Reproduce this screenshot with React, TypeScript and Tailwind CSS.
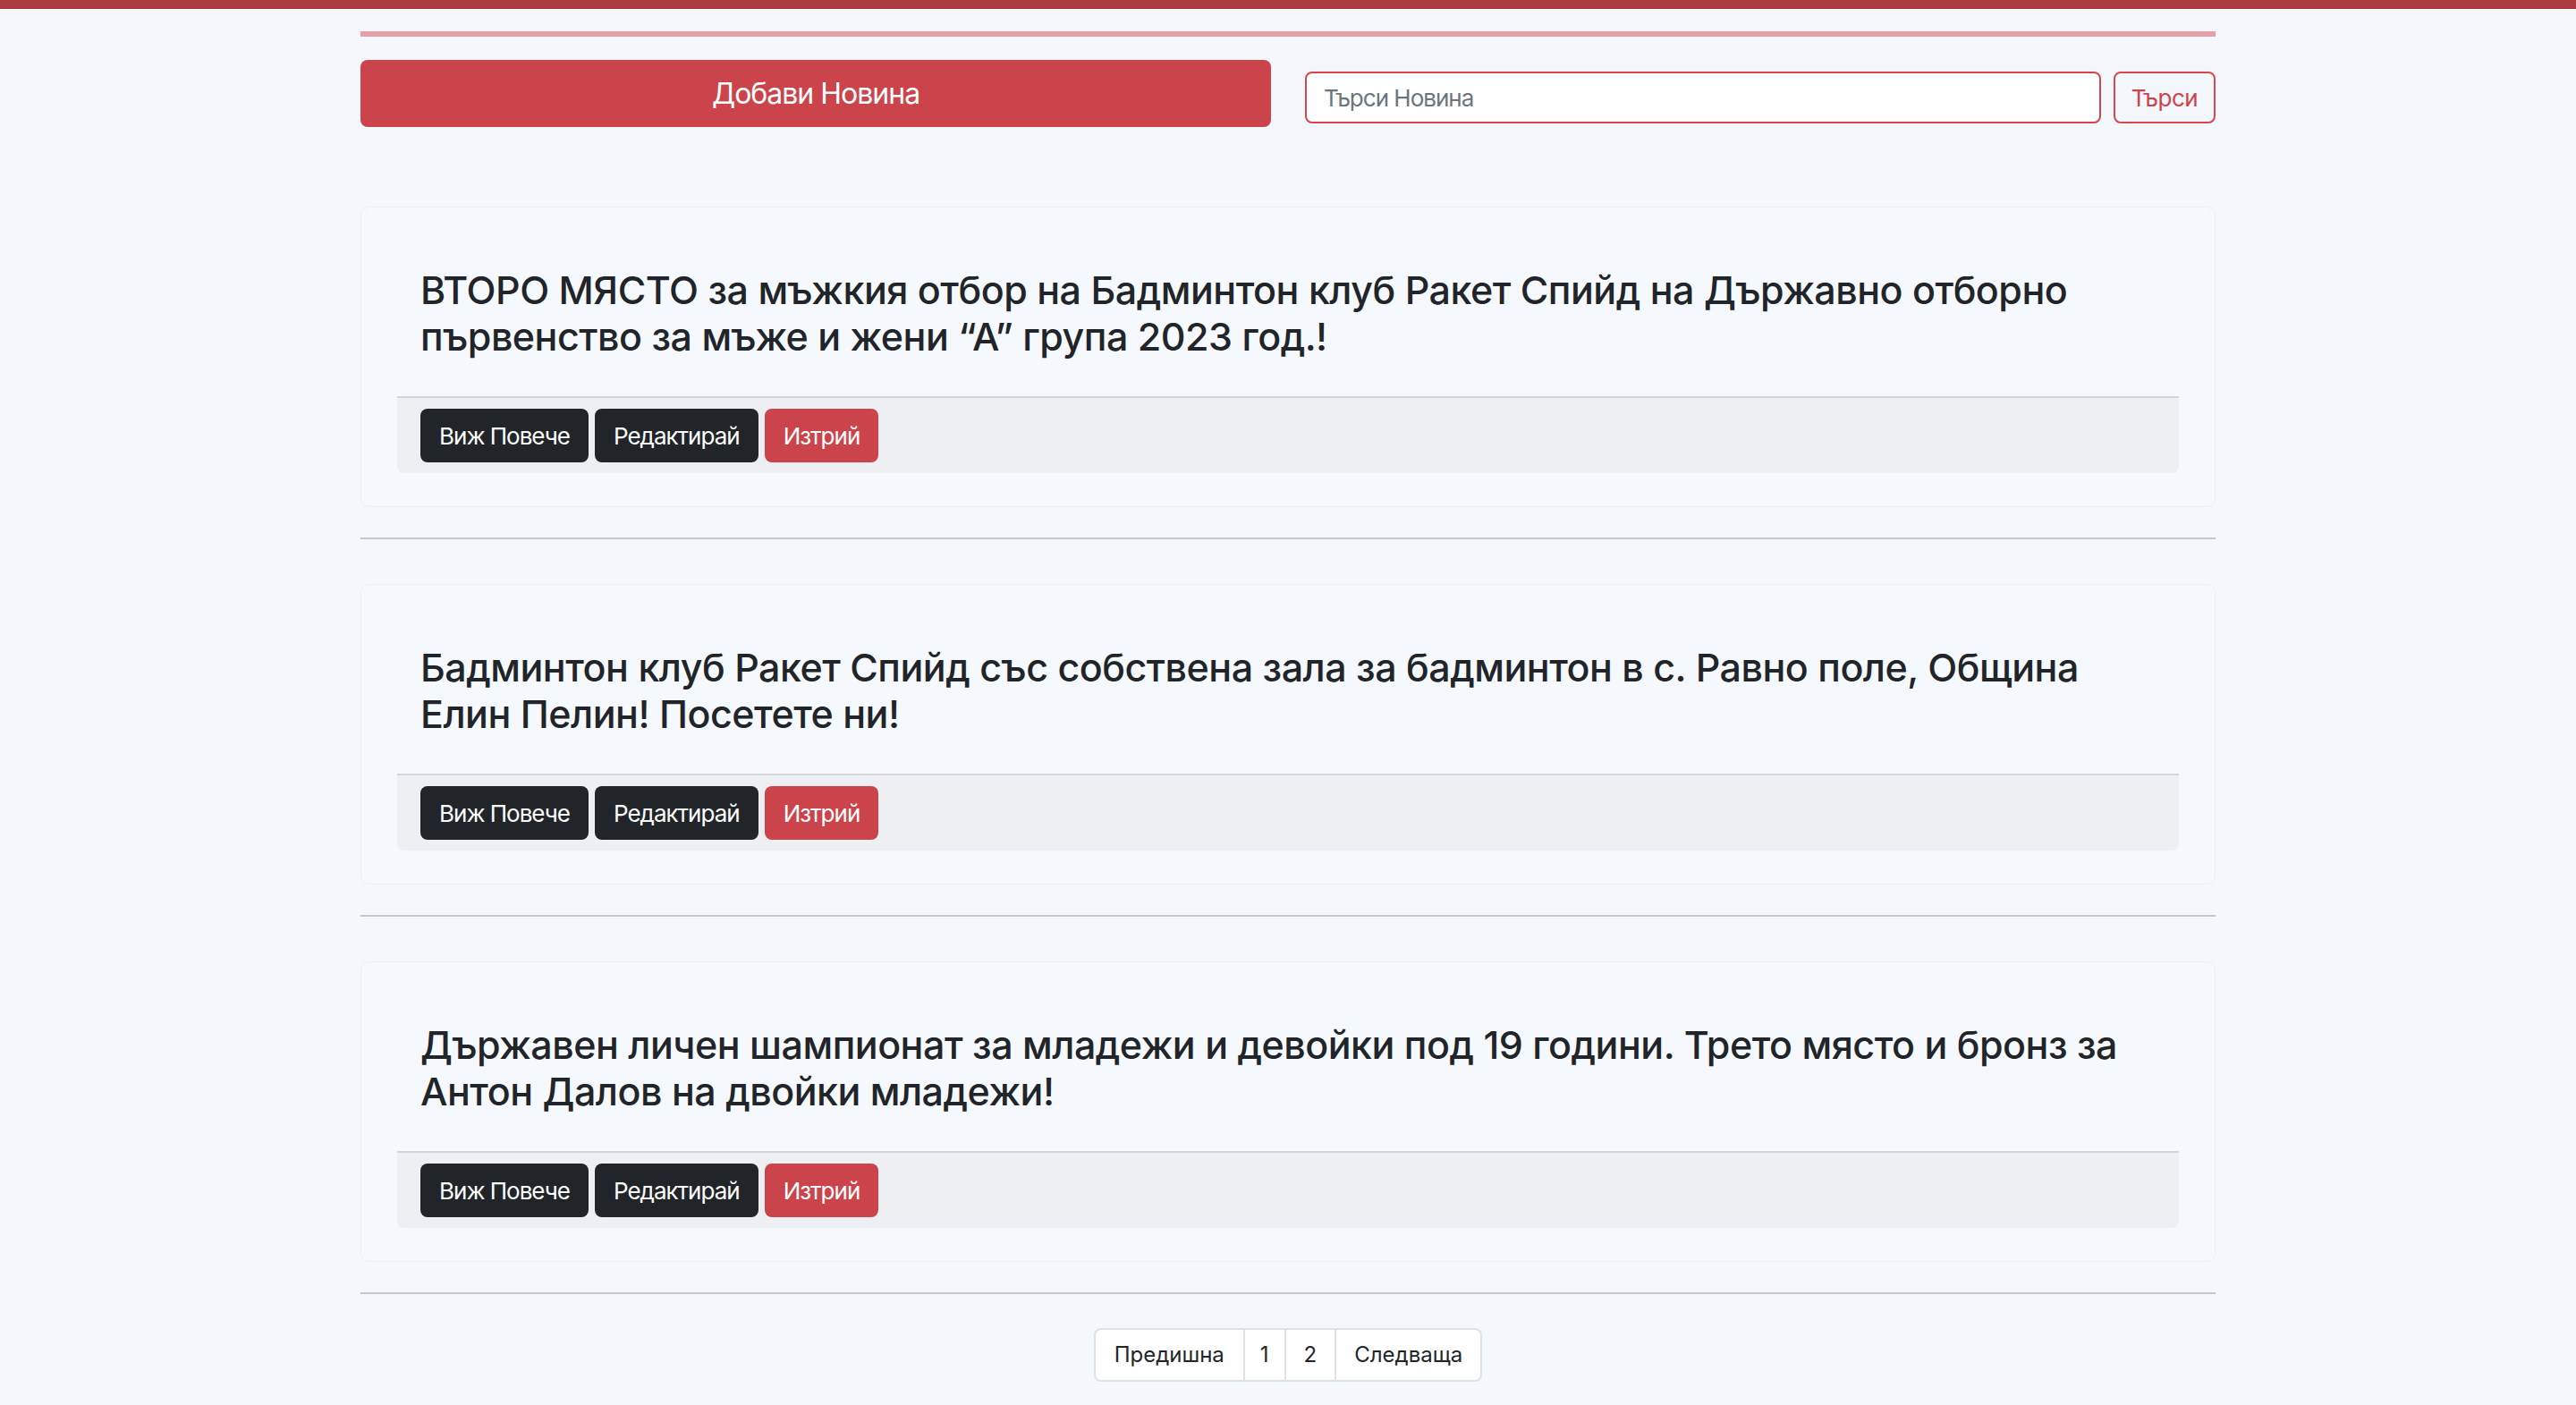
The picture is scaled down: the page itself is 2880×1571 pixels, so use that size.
import React from 'react';

interface NewsItem {
  id: number;
  title: string;
}

const news: NewsItem[] = [
  {
    id: 1,
    title:
      'ВТОРО МЯСТО за мъжкия отбор на Бадминтон клуб Ракет Спийд на Държавно отборно първенство за мъже и жени “А” група 2023 год.!',
  },
  {
    id: 2,
    title:
      'Бадминтон клуб Ракет Спийд със собствена зала за бадминтон в с. Равно поле, Община Елин Пелин! Посетете ни!',
  },
  {
    id: 3,
    title:
      'Държавен личен шампионат за младежи и девойки под 19 години. Трето място и бронз за Антон Далов на двойки младежи!',
  },
];

function NewsCard({ item }: { item: NewsItem }) {
  return (
    <div className="rounded-[10px] border border-[#eceff4] bg-[#f5f8fc] px-[40px] pt-[40px] pb-[37px]">
      <h4 className="p-[26px] text-[43px] leading-[52px] font-medium tracking-[-0.5px] text-[#212529]">{item.title}</h4>
      {/* footer with actions */}
      <div className="mt-[15px] flex gap-[7px] rounded-b-[8px] border-t-2 border-[#d3d5da] bg-[#eeeff3] px-[26px] py-[12px]">
        <button className="h-[60px] rounded-[8px] bg-[#212529] px-[21px] text-[26px] tracking-[-1px] text-white">Виж Повече</button>
        <button className="h-[60px] rounded-[8px] bg-[#212529] px-[21px] text-[26px] tracking-[-1px] text-white">Редактирай</button>
        <button className="h-[60px] rounded-[8px] bg-[#cc444b] px-[21px] text-[26px] tracking-[-1px] text-white">Изтрий</button>
      </div>
    </div>
  );
}

export default function App() {
  return (
    <div className="min-h-screen bg-[#f4f7fb] font-['Inter','Noto_Sans',sans-serif] text-[#212529]">
      <div className="h-[10px] bg-[#ad3a40]" />

      <div className="mx-auto w-[2074px] pb-[24px]">
        <div className="mt-[25px] h-[6px] bg-[#e4a0a5]" />

        {/* Top actions */}
        <div className="mt-[26px] flex items-start">
          <button className="h-[75px] w-[1018px] rounded-[8px] bg-[#cc444b] text-[32px] tracking-[-1px] text-white">
            Добави Новина
          </button>
          <form className="ml-[38px] mt-[13px] flex flex-1 gap-[14px]" onSubmit={(e) => e.preventDefault()}>
            <input
              type="text"
              placeholder="Търси Новина"
              className="h-[58px] flex-1 rounded-[8px] border-2 border-[#d9434b] bg-white px-[19px] text-[26px] tracking-[-1px] outline-none placeholder:text-[#6c757d]"
            />
            <button className="h-[58px] w-[114px] rounded-[8px] border-2 border-[#d6474e] text-[26px] tracking-[-0.5px] text-[#cc444b]">
              Търси
            </button>
          </form>
        </div>

        {/* News list */}
        <div className="mt-[89px]">
          {news.map((item, i) => (
            <div key={item.id} className={i > 0 ? 'mt-[50px]' : ''}>
              <NewsCard item={item} />
              <div className="mt-[34px] h-[2px] bg-[#c4c7cc]" />
            </div>
          ))}
        </div>

        {/* Pagination */}
        <div className="mt-[38px] flex justify-center">
          <div className="flex h-[60px] overflow-hidden rounded-[8px] border-2 border-[#dee2e6] bg-white text-[24px] text-[#212529]">
            <span className="flex items-center px-[21px]">Предишна</span>
            <span className="flex items-center border-l-2 border-[#dee2e6] px-[17px]">1</span>
            <span className="flex items-center border-l-2 border-[#dee2e6] px-[20px]">2</span>
            <span className="flex items-center border-l-2 border-[#dee2e6] px-[20px]">Следваща</span>
          </div>
        </div>
      </div>
    </div>
  );
}
